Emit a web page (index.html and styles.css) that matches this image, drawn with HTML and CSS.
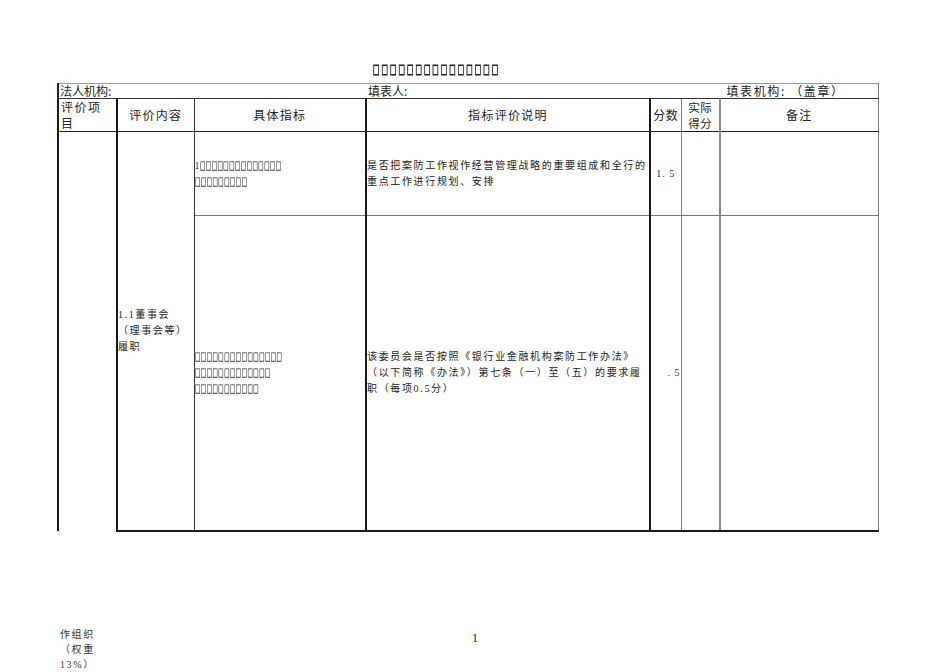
FILE: index.html
```html
<!DOCTYPE html>
<html lang="zh-CN">
<head>
<meta charset="utf-8">
<title>评价表</title>
<link rel="stylesheet" href="styles.css">
</head>
<body>
<div class="page">
  <div class="title"><span class="tofu big">□□□□□□□□□□□□□□□</span></div>
  <table class="sheet">
    <colgroup>
      <col class="c1"><col class="c2"><col class="c3"><col class="c4"><col class="c5"><col class="c6"><col class="c7">
    </colgroup>
    <tr class="r-info">
      <td colspan="7" class="info">
        <div class="info-line">
          <span class="info-a">法人机构:</span>
          <span class="info-b">填表人:</span>
          <span class="info-c">填表机构: （盖章）</span>
        </div>
      </td>
    </tr>
    <tr class="r-head">
      <th class="h1 bl-thick br-thick">评价项<br>目</th>
      <th class="br-mid">评价内容</th>
      <th class="br-thick">具体指标</th>
      <th class="br-thick">指标评价说明</th>
      <th class="h-narrow br-gray">分数</th>
      <th class="h-narrow h-two br-gray2">实际<br>得分</th>
      <th class="br-gray">备注</th>
    </tr>
    <tr class="r1">
      <td rowspan="2" class="first bl-thick br-thick"></td>
      <td rowspan="2" class="content br-mid bottom-thick">1.1董事会<br>（理事会等）<br>履职</td>
      <td class="ind br-thick rb-gray"><div class="ind-line"><span class="num">1</span><span class="tofu">□□□□□□□□□□□□□□</span></div><div class="ind-line"><span class="tofu">□□□□□□□□□</span></div></td>
      <td class="desc br-thick rb-gray">是否把案防工作视作经营管理战略的重要组成和全行的<br>重点工作进行规划、安排</td>
      <td class="score br-gray rb-gray">1. 5</td>
      <td class="br-gray2 rb-gray"></td>
      <td class="br-gray rb-gray"></td>
    </tr>
    <tr class="r2">
      <td class="ind br-thick bottom-thick"><div class="ind-line"><span class="tofu">□□□□□□□□□□□□□□□</span></div><div class="ind-line"><span class="tofu">□□□□□□□□□□□□□</span></div><div class="ind-line"><span class="tofu">□□□□□□□□□□□</span></div></td>
      <td class="desc br-thick bottom-thick">该委员会是否按照《银行业金融机构案防工作办法》<br>（以下简称《办法》）第七条（一）至（五）的要求履<br>职（每项0.5分）</td>
      <td class="score-r br-gray bottom-thick">. 5</td>
      <td class="br-gray2 bottom-thick"></td>
      <td class="br-gray bottom-thick"></td>
    </tr>
  </table>
  <div class="footer">
    <div class="overflow">作组织<br>（权重<br>13%）</div>
    <div class="pageno">1</div>
  </div>
</div>
</body>
</html>
```

FILE: styles.css
```css
html, body {
  margin: 0;
  padding: 0;
  background: #ffffff;
}

body {
  font-family: "Liberation Serif", "Noto Sans CJK SC", serif;
  color: #222;
}

.page {
  width: 950px;
  height: 672px;
  padding: 60px 0 0 57px;
  box-sizing: border-box;
}

.title {
  height: 23px;
  padding-left: 316px;
  line-height: 20px;
}

.tofu {
  display: inline-block;
  font-family: "Noto Sans CJK SC", sans-serif;
  font-size: 10px;
  letter-spacing: 1px;
  line-height: 16px;
  color: #555;
  -webkit-text-stroke: 0.5px #555;
  transform: scaleX(0.53) translateZ(0);
  transform-origin: 0 50%;
  white-space: nowrap;
}

.tofu.big {
  font-size: 12px;
  letter-spacing: 4px;
  line-height: 20px;
  color: #222;
  -webkit-text-stroke: 0.9px #222;
}

.sheet {
  border-collapse: collapse;
  table-layout: fixed;
  width: 820px;
}

.c1 { width: 59px; }
.c2 { width: 77px; }
.c3 { width: 172px; }
.c4 { width: 284px; }
.c5 { width: 31px; }
.c6 { width: 39px; }
.c7 { width: 158px; }

.sheet td, .sheet th {
  padding: 0;
  font-weight: normal;
  overflow: hidden;
  white-space: nowrap;
}

.r-info { height: 15px; }
.r-head { height: 33px; }
.r1 { height: 84px; }
.r2 { height: 315px; }

.info {
  border-top: 1px solid #9a9a9a;
  border-left: 2px solid #222;
  border-right: 1px solid #777;
  border-bottom: 1px solid #333;
  font-family: "Noto Sans CJK SC", sans-serif;
  font-size: 12px;
  line-height: 14px;
  color: #222;
}

.info-line {
  display: flex;
  height: 14px;
}

.info-a {
  width: 308px;
  padding-left: 1px;
}

.info-b {
  flex: 1;
}

.info-c {
  margin-right: 33px;
  letter-spacing: 1.6px;
}

.r-head th {
  font-family: "Noto Sans CJK SC", sans-serif;
  font-size: 12px;
  letter-spacing: 1.3px;
  line-height: 14px;
  color: #222;
  text-align: center;
  vertical-align: middle;
  border-bottom: 1px solid #222;
}

.r-head th.h1 {
  text-align: left;
  vertical-align: top;
  padding-left: 2px;
  padding-top: 0;
  line-height: 16px;
  letter-spacing: 1.5px;
}

.r-head th.h-narrow {
  letter-spacing: 0.5px;
}

.r-head th.h-two {
  line-height: 16px;
  font-size: 11.5px;
}

.bl-thick { border-left: 2px solid #1a1a1a; }
.br-thick { border-right: 2px solid #1a1a1a; }
.br-mid { border-right: 1px solid #333; }
.br-gray { border-right: 1px solid #808080; }
.br-gray2 { border-right: 2px solid #8a8a8a; }
.rb-gray { border-bottom: 1px solid #777; }
.bottom-thick { border-bottom: 2px solid #1a1a1a; }

.first {
  border-bottom: none;
}

.content {
  font-family: "Liberation Serif", "Noto Sans CJK SC", serif;
  font-size: 10px;
  letter-spacing: 1.6px;
  line-height: 16px;
  vertical-align: middle;
  padding-left: 2px;
  color: #222;
}

.ind {
  vertical-align: middle;
  padding-left: 3px;
}

.ind-line {
  display: flex;
  align-items: center;
  height: 16px;
}

.ind .num {
  font-size: 10px;
  line-height: 16px;
  color: #333;
}

.desc {
  font-family: "Liberation Serif", "Noto Sans CJK SC", serif;
  font-size: 10px;
  letter-spacing: 1.65px;
  line-height: 16px;
  vertical-align: middle;
  padding-left: 2px;
  color: #222;
}

.score {
  font-size: 10px;
  letter-spacing: 1px;
  text-align: center;
  vertical-align: middle;
  color: #333;
}

.score-r {
  font-size: 10px;
  letter-spacing: 1px;
  text-align: right;
  vertical-align: middle;
  padding-right: 0;
  color: #333;
}

.footer {
  display: flex;
  margin-top: 95px;
}

.overflow {
  width: 412px;
  padding-left: 3px;
  font-family: "Liberation Serif", "Noto Sans CJK SC", serif;
  font-size: 10px;
  letter-spacing: 1.6px;
  line-height: 15px;
  color: #333;
}

.pageno {
  font-size: 12px;
  padding-top: 4px;
  color: #222;
}
```
